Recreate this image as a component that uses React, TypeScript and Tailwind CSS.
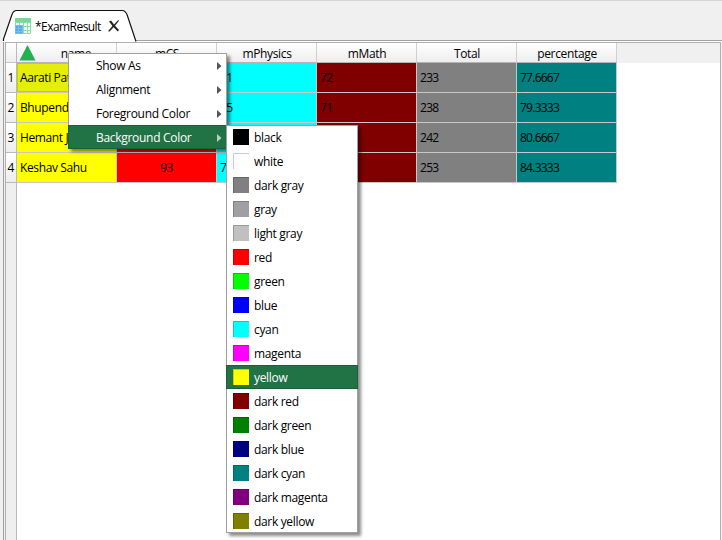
import React from "react";

type Column = { title: string; fill: string; values: string[]; align: string };

const columns: Column[] = [
  { title: "name", fill: "bg-[#ffff00]", values: ["Aarati Patel", "Bhupend", "Hemant J", "Keshav Sahu"], align: "pl-[3px] tracking-[-0.38px]" },
  { title: "mCS", fill: "bg-[#ff0000]", values: ["", "", "", "93"], align: "justify-center tracking-[-0.5px]" },
  { title: "mPhysics", fill: "bg-[#00ffff]", values: ["81", "85", "", "78"], align: "pl-[3px] tracking-[-0.5px]" },
  { title: "mMath", fill: "bg-[#800000]", values: ["72", "71", "", ""], align: "pl-[3px] tracking-[-0.5px]" },
  { title: "Total", fill: "bg-[#808080]", values: ["233", "238", "242", "253"], align: "pl-[3px] tracking-[-0.7px]" },
  { title: "percentage", fill: "bg-[#008080]", values: ["77.6667", "79.3333", "80.6667", "84.3333"], align: "pl-[3px] tracking-[-0.75px]" },
];

const menuItems = ["Show As", "Alignment", "Foreground Color", "Background Color"];

const colors: [string, string][] = [
  ["black", "bg-[#000000]"],
  ["white", "bg-[#ffffff]"],
  ["dark gray", "bg-[#808080]"],
  ["gray", "bg-[#a0a0a4]"],
  ["light gray", "bg-[#c0c0c0]"],
  ["red", "bg-[#ff0000]"],
  ["green", "bg-[#00ff00]"],
  ["blue", "bg-[#0000ff]"],
  ["cyan", "bg-[#00ffff]"],
  ["magenta", "bg-[#ff00ff]"],
  ["yellow", "bg-[#ffff00]"],
  ["dark red", "bg-[#800000]"],
  ["dark green", "bg-[#008000]"],
  ["dark blue", "bg-[#000080]"],
  ["dark cyan", "bg-[#008080]"],
  ["dark magenta", "bg-[#800080]"],
  ["dark yellow", "bg-[#808000]"],
];

function TableIcon() {
  return (
    <svg width="16" height="16" viewBox="0 0 16 16" className="shrink-0">
      <rect width="16" height="16" rx="1" fill="#8fdba6" />
      <rect y="0" width="16" height="4" rx="1" fill="#7ed597" />
      {[0, 1, 2].map((r) =>
        [0, 1, 2, 3].map((c) => (
          <rect key={`${r}-${c}`} x={1 + c * 4} y={5 + r * 4} width={c === 3 ? 2 : 3} height={r === 2 ? 2 : 3} fill="#f8fff9" />
        )),
      )}
      <rect y="7" width="8" height="9" fill="#6fc2f2" />
      <path d="M1 8h2v2H1zM4 8h3v2H4zM1 11h2v2H1zM4 11h3v2H4zM1 14h2v1H1zM4 14h3v1H4z" fill="#4aaeea" />
    </svg>
  );
}

function CloseIcon() {
  return (
    <svg width="14" height="14" viewBox="0 0 14 14" className="shrink-0">
      <path d="M2 2.2 4.3 1.8 7 5.4 11 1.3 12.2 1.5 8 6.8 12 11 10.8 12.4 6.6 8.3 2.6 12.4 1 12.2 5.4 7.1Z" fill="#222" />
    </svg>
  );
}

function DocumentTab() {
  return (
    <div className="relative h-[42px] w-full shrink-0 border-t border-[#d5d5d5]">
      <svg className="absolute top-[-1px] left-0" width="722" height="43">
        <path d="M136 40.5H722" stroke="#a0a0a0" />
        <path d="M136 41.5H722" stroke="#fff" />
        <path d="M3.5 42V39L12 14.5Q13.5 10.5 16.5 10.5H122.5Q125 10.5 127 14.5L136 41.5V42Z" fill="#fff" />
        <path d="M3.5 41V39L12 14.5Q13.5 10.5 16.5 10.5H122.5Q125 10.5 127 14.5L136 41.5" fill="none" stroke="#111" strokeWidth="1.2" />
      </svg>
      <div className="relative flex h-[36px] items-center pt-[14px] pl-[15px]">
        <TableIcon />
        <span className="mt-px ml-[4px] w-[66px] tracking-[-0.55px]">*ExamResult</span>
        <span className="ml-[6px]"><CloseIcon /></span>
      </div>
    </div>
  );
}

function DataTable() {
  return (
    <div className="ml-[3px] flex min-h-0 flex-1 border-l border-[#a0a0a0] bg-[#f0f0f0] pl-px">
      <div className="flex w-[716px] border border-b-0 border-[#b0b0b0] bg-white">
        <div className="flex w-[11px] shrink-0 flex-col border-r border-[#b9b9b9] bg-[#efefef]">
          <div className="h-[20px] shrink-0 border-b border-[#c5c5c5] bg-linear-to-b from-white to-[#eeeeee]" />
          {[1, 2, 3, 4].map((n) => (
            <div key={n} className="flex h-[30px] shrink-0 items-center justify-center border-b border-[#b9b9b9] bg-linear-to-b from-white to-[#ededed] pt-px">{n}</div>
          ))}
        </div>
        {columns.map((col, ci) => (
          <div key={col.title} className="w-[100px] shrink-0">
            <div className="relative flex h-[20px] items-center justify-center border-r border-b border-r-[#d0d0d0] border-b-[#b5b5b5] bg-linear-to-b from-white to-[#eeeeee] pt-[2px] pl-px tracking-[-0.35px]">
              {ci === 0 && <svg className="absolute top-[2px] left-[2px]" width="17" height="16"><path d="M8.5 0 16.5 15.5H.5Z" fill="#22b14c" /></svg>}
              <span className={ci === 0 ? "ml-[18px]" : ""}>{col.title}</span>
            </div>
            {col.values.map((value, ri) => (
              <div key={ri} className={`flex h-[30px] items-center border-r border-b border-[#c8c8c8] ${ci === 0 && ri === 0 ? "bg-[#e5ee08] shadow-[inset_0_0_0_1px_#c5cd12]" : col.fill} ${col.align}`}>{value}</div>
            ))}
          </div>
        ))}
        <div className="h-[20px] flex-1 bg-[#f0f0f0]" />
      </div>
    </div>
  );
}

function ContextMenu() {
  return (
    <div className="absolute top-[53px] left-[68px] w-[159px] bg-white shadow-[3px_3px_3px_rgba(0,0,0,0.45)] outline-1 -outline-offset-1 outline-[#a0a0a0]">
      {menuItems.map((label, i) => (
        <div key={label} className={`flex h-[24px] items-center justify-between pr-[5px] pl-[28px] ${i === 3 ? "relative bg-[#217346] text-white shadow-[inset_0_0_0_1px_#195f39]" : ""}`}>
          <span className="pt-[2px] tracking-[-0.3px]">{label}</span>
          <svg width="5" height="8" className="mt-px"><path d="M0 0 4.5 4 0 8Z" fill={i === 3 ? "#b8d0c2" : "#555"} /></svg>
        </div>
      ))}
    </div>
  );
}

function ColorMenu() {
  return (
    <div className="absolute top-[125px] left-[226px] w-[132px] bg-white shadow-[3px_3px_3px_rgba(0,0,0,0.45)] outline-1 -outline-offset-1 outline-[#a0a0a0]">
      {colors.map(([label, fill]) => (
        <div key={label} className={`flex h-[24px] items-center gap-[5px] pl-[7px] ${label === "yellow" ? "relative bg-[#217346] text-white shadow-[inset_0_0_0_1px_#195f39]" : ""}`}>
          <span className={`size-[16px] border-t border-l border-black/20 ${fill}`} />
          <span className="pt-[2px] tracking-[-0.33px]">{label}</span>
        </div>
      ))}
    </div>
  );
}

export default function App() {
  return (
    <main className="relative flex h-[540px] w-[722px] flex-col overflow-hidden bg-[#f0f0f0] font-['Open_Sans','Noto_Sans',sans-serif] text-[12px] leading-[16px] whitespace-nowrap text-black">
      <DocumentTab />
      <DataTable />
      <ContextMenu />
      <ColorMenu />
    </main>
  );
}
